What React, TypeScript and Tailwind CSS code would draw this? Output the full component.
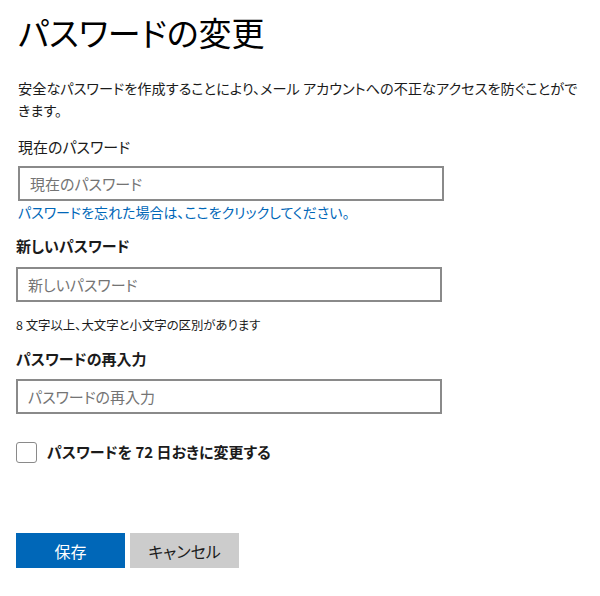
const font = "font-['Yu_Gothic_UI','Noto_Sans_CJK_JP',sans-serif] [font-feature-settings:'palt']";

function Field({ placeholder }: { placeholder: string }) {
  return (
    <input
      type="password"
      placeholder={placeholder}
      className="h-[35px] w-[426px] border-2 border-[#8a8a8a] bg-white px-[10px] text-[15px] text-[#1b1b1b] outline-none placeholder:text-[#747474]"
    />
  );
}

export default function App() {
  return (
    <div className={`${font} h-[596px] w-[600px] bg-white px-4 pt-[12px] text-[#1b1b1b]`}>
      <div className="pl-[2px]">
        <h1 className="text-[33px] leading-[40px] font-normal text-black">パスワードの変更</h1>
        <p className="mt-[25px] text-[14.2px] leading-[22px]">
          安全なパスワードを作成することにより、メール アカウントへの不正なアクセスを防ぐことができます。
        </p>
        <label className="mt-[15px] block text-[15px] leading-[22px]">現在のパスワード</label>
        <div className="mt-[8px]">
          <Field placeholder="現在のパスワード" />
        </div>
        <a href="#" className="block text-[14px] leading-[22px] text-[#0067b8]">
          パスワードを忘れた場合は、ここをクリックしてください。
        </a>
      </div>

      <label className="mt-[12px] block text-[15px] leading-[22px] font-bold">新しいパスワード</label>
      <div className="mt-[10px]">
        <Field placeholder="新しいパスワード" />
      </div>
      <p className="mt-[14px] text-[12.4px] leading-[18px]">8 文字以上、大文字と小文字の区別があります</p>

      <label className="mt-[14px] block text-[15px] leading-[22px] font-bold">パスワードの再入力</label>
      <div className="mt-[9px]">
        <Field placeholder="パスワードの再入力" />
      </div>

      <label className="mt-[27px] flex items-center gap-[10px]">
        <span className="h-[21px] w-[21px] rounded-[3px] border border-[#8a8a8a] bg-white" />
        <span className="text-[15px] leading-[22px] font-bold">パスワードを 72 日おきに変更する</span>
      </label>

      <div className="mt-[70px] flex gap-[5px]">
        <button className="h-[35px] w-[109px] bg-[#0067b8] text-[16px] text-white">保存</button>
        <button className="h-[35px] w-[109px] bg-[#cccccc] text-[16px] text-[#1b1b1b]">キャンセル</button>
      </div>
    </div>
  );
}
